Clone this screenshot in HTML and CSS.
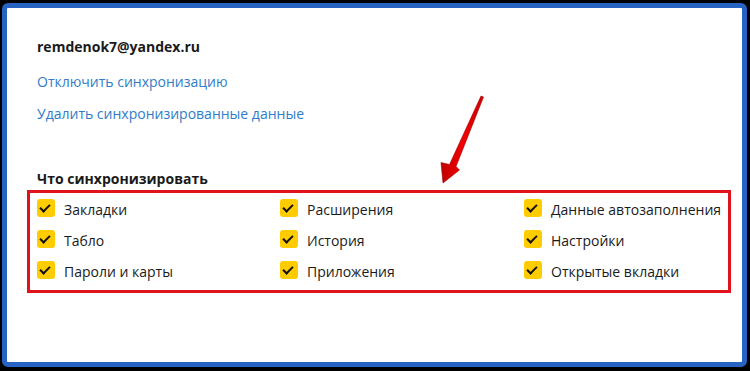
FILE: index.html
```html
<!DOCTYPE html>
<html lang="ru">
<head>
<meta charset="utf-8">
<link rel="stylesheet" href="styles.css">
</head>
<body>
<div class="frame">
  <div class="account">remdenok7@yandex.ru</div>
  <a class="link first" href="#">Отключить синхронизацию</a>
  <a class="link" href="#">Удалить синхронизированные данные</a>
  <div class="heading">Что синхронизировать</div>
  <div class="box">
    <div class="item"><span class="cb"></span>Закладки</div>
    <div class="item"><span class="cb"></span>Расширения</div>
    <div class="item"><span class="cb"></span>Данные автозаполнения</div>
    <div class="item"><span class="cb"></span>Табло</div>
    <div class="item"><span class="cb"></span>История</div>
    <div class="item"><span class="cb"></span>Настройки</div>
    <div class="item"><span class="cb"></span>Пароли и карты</div>
    <div class="item"><span class="cb"></span>Приложения</div>
    <div class="item"><span class="cb"></span>Открытые вкладки</div>
  </div>
</div>
<svg class="arrow" width="750" height="371" viewBox="0 0 750 371">
  <defs>
    <linearGradient id="ag" x1="0" y1="0" x2="1" y2="0">
      <stop offset="0" stop-color="#c00000"/>
      <stop offset="0.5" stop-color="#f20000"/>
      <stop offset="1" stop-color="#d00000"/>
    </linearGradient>
  </defs>
  <polygon points="481,96 483.5,97 456,166.5 459.5,170 443,183 441,162.5 449.5,164.5" fill="url(#ag)" stroke="#9a0000" stroke-width="0.6" stroke-linejoin="round"/>
</svg>
</body>
</html>
```
FILE: styles.css
```css
html, body {
  margin: 0;
  padding: 0;
}
body {
  background: #000;
  width: 750px;
  height: 371px;
  overflow: hidden;
  position: relative;
  font-family: "Open Sans", "Noto Sans", sans-serif;
  color: #1a1a1a;
}
.frame {
  box-sizing: border-box;
  margin: 3px 3px 0 2px;
  height: 364px;
  border: 5px solid #2763c2;
  border-radius: 6px;
  background: #fff;
  display: flex;
  flex-direction: column;
  align-items: flex-start;
  padding-left: 30px;
}
.account {
  margin-top: 29px;
  font-weight: 700;
  font-size: 14px;
  line-height: 20px;
}
.link {
  color: #2f7cc8;
  text-decoration: none;
  font-size: 14px;
  line-height: 20px;
  margin-top: 12px;
}
.link.first {
  margin-top: 15px;
}
.heading {
  margin-top: 45px;
  font-weight: 700;
  font-size: 14px;
  line-height: 20px;
}
.box {
  box-sizing: border-box;
  margin-left: -10px;
  margin-top: 1px;
  width: 704px;
  height: 103px;
  border: 3px solid #e0121b;
  padding: 1px 0 0 7px;
  display: grid;
  grid-template-columns: 243px 244px 1fr;
  grid-auto-rows: 31px;
}
.item {
  display: flex;
  align-items: center;
  font-size: 14px;
  color: #1a1a1a;
}
.cb {
  width: 18px;
  height: 18px;
  border-radius: 3px;
  background: #ffcc00;
  margin-right: 9px;
  margin-top: -3px;
  position: relative;
  flex: none;
}
.cb::after {
  content: "";
  position: absolute;
  left: 5px;
  top: 3px;
  width: 4px;
  height: 8px;
  border-right: 2.5px solid #111;
  border-bottom: 2.5px solid #111;
  transform: rotate(45deg);
}
.arrow {
  position: absolute;
  left: 0;
  top: 0;
  pointer-events: none;
}
```
